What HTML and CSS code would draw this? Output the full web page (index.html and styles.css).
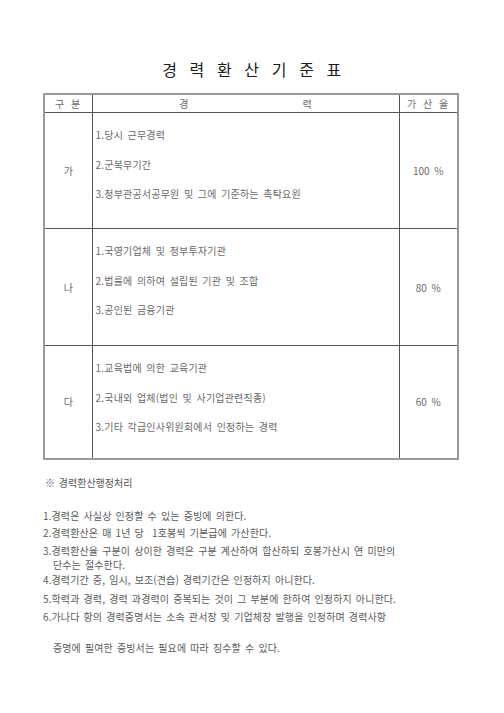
FILE: index.html
```html
<!DOCTYPE html>
<html lang="ko">
<head>
<meta charset="utf-8">
<title>경력환산기준표</title>
<link rel="stylesheet" href="styles.css">
</head>
<body>
<div class="page">
  <h1 class="title">경 력 환 산 기 준 표</h1>
  <table class="grid">
    <colgroup>
      <col class="c1"><col class="c2"><col class="c3">
    </colgroup>
    <thead>
      <tr class="head">
        <th class="sp">구 분</th>
        <th><span class="split"><span>경</span><span>력</span></span></th>
        <th class="sp">가 산 율</th>
      </tr>
    </thead>
    <tbody>
      <tr class="row r1">
        <td class="mid">가</td>
        <td class="items">
          <p>1.당시 근무경력</p>
          <p>2.군복무기간</p>
          <p>3.정부관공서공무원 및 그에 기준하는 촉탁요원</p>
        </td>
        <td class="mid">100 %</td>
      </tr>
      <tr class="row r2">
        <td class="mid">나</td>
        <td class="items">
          <p>1.국영기업체 및 정부투자기관</p>
          <p>2.법률에 의하여 설립된 기관 및 조합</p>
          <p>3.공인된 금융기관</p>
        </td>
        <td class="mid">80 %</td>
      </tr>
      <tr class="row r3">
        <td class="mid">다</td>
        <td class="items">
          <p>1.교육법에 의한 교육기관</p>
          <p>2.국내외 업체(법인 및 사기업관련직종)</p>
          <p>3.기타 각급인사위원회에서 인정하는 경력</p>
        </td>
        <td class="mid">60 %</td>
      </tr>
    </tbody>
  </table>

  <div class="notes">
    <p class="note-head">※ 경력환산행정처리</p>
    <ol class="rules">
      <li class="l1">1.경력은 사실상 인정할 수 있는 증빙에 의한다.</li>
      <li class="l2">2.경력환산은 매 1년 당&nbsp; 1호봉씩 기본급에 가산한다.</li>
      <li class="l3">3.경력환산율 구분이 상이한 경력은 구분 계산하여 합산하되 호봉가산시 연 미만의<br><span class="indent">단수는 절수한다.</span></li>
      <li class="l4">4.경력기간 중, 임시, 보조(견습) 경력기간은 인정하지 아니한다.</li>
      <li class="l5">5.학력과 경력, 경력 과경력이 중복되는 것이 그 부분에 한하여 인정하지 아니한다.</li>
      <li class="l6">6.가나다 항의 경력증명서는 소속 관서장 및 기업체장 발행을 인정하며 경력사항</li>
      <li class="cont">증명에 필여한 증빙서는 필요에 따라 징수할 수 있다.</li>
    </ol>
  </div>
</div>
</body>
</html>
```

FILE: styles.css
```css
html, body {
  margin: 0;
  padding: 0;
  background: #fff;
}

body {
  font-family: "Noto Sans CJK KR", "Noto Sans", sans-serif;
  color: #555;
}

.page {
  width: 504px;
  height: 713px;
  padding-top: 59px;
  box-sizing: border-box;
}

.title {
  margin: 0 0 14px 0;
  text-align: center;
  font-size: 16px;
  line-height: 20px;
  font-weight: normal;
  letter-spacing: 3.6px;
  word-spacing: 1px;
  color: #1a1a1a;
  padding-left: 3px;
}

.grid {
  margin-left: 43px;
  width: 414px;
  border-collapse: collapse;
  border: 2px solid #9a9a9a;
  table-layout: fixed;
  font-size: 10px;
  color: #6a6a6a;
}

.c1 { width: 48px; }
.c2 { width: 307px; }
.c3 { width: 59px; }

.grid th, .grid td {
  border: 1px solid #555;
  padding: 0;
}

.grid th {
  font-weight: normal;
  height: 17px;
  line-height: 17px;
  text-align: center;
  color: #6a6a6a;
}

.grid th.sp {
  letter-spacing: 1.5px;
  word-spacing: 1px;
}

.split {
  display: flex;
  justify-content: center;
  gap: 114px;
}

.r1 { height: 116px; }
.r2 { height: 117px; }
.r3 { height: 113px; }

.mid {
  text-align: center;
  vertical-align: middle;
  word-spacing: 2px;
}

.items {
  vertical-align: top;
}

.grid td.items {
  padding: 7px 0 0 3px;
}

.items p {
  margin: 0;
  line-height: 29.5px;
  letter-spacing: 0.2px;
  word-spacing: 1.5px;
}

.notes {
  padding-left: 43px;
  font-size: 10px;
  color: #5a5a5a;
}

.note-head {
  margin: 14px 0 0 2px;
  line-height: 18px;
  word-spacing: 1px;
}

.rules {
  list-style: none;
  margin: 15px 0 0 0;
  padding: 0;
}

.rules li {
  line-height: 18px;
  letter-spacing: 0.1px;
  word-spacing: 1.2px;
}

.rules .l2 { margin-top: -1px; }
.rules .l3 { margin-top: 2px; line-height: 14px; }
.rules .l4 { margin-top: -1px; }
.rules .l5 { margin-top: 1px; }
.rules .l6 { margin-top: 0; }
.rules .cont { margin-top: 13px; padding-left: 10px; }

.indent {
  padding-left: 10px;
}
```
